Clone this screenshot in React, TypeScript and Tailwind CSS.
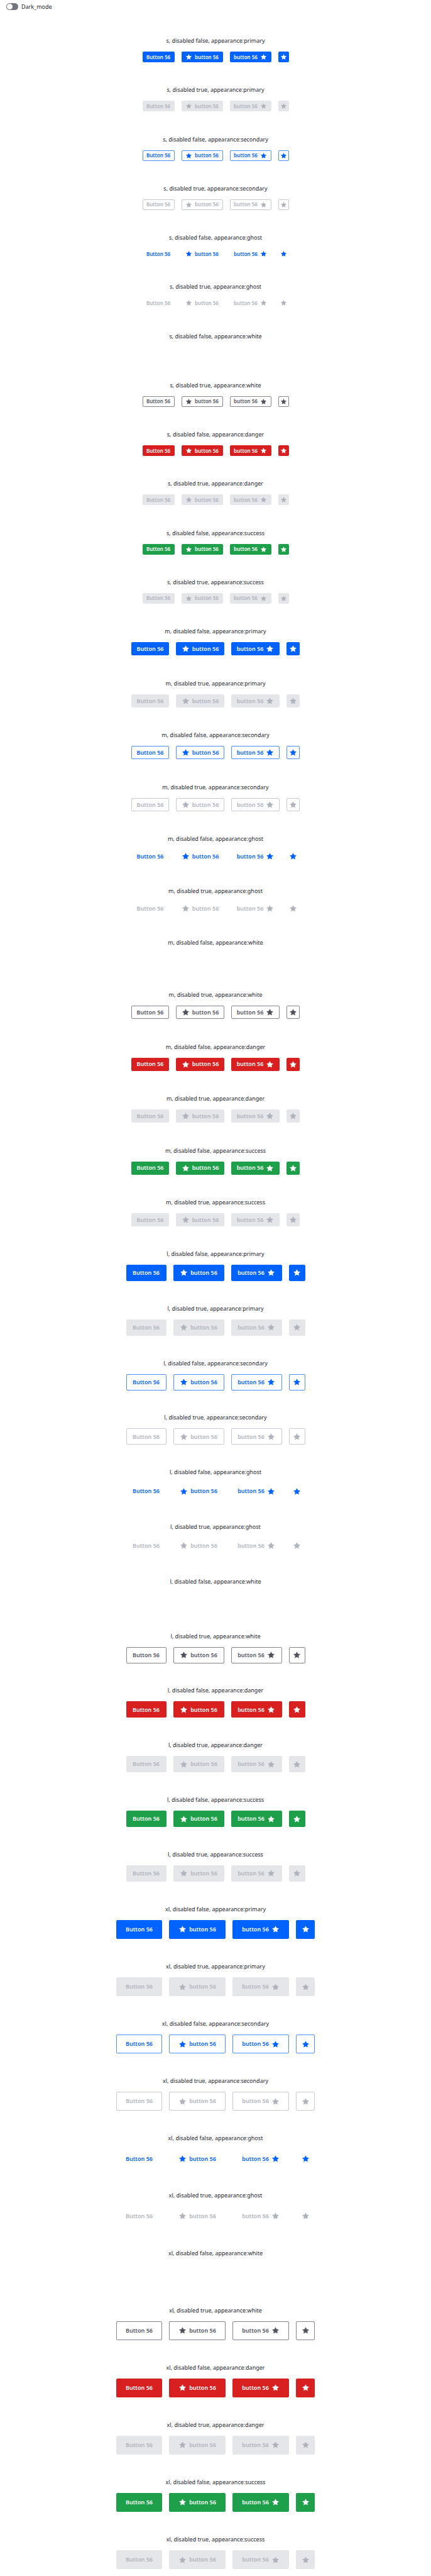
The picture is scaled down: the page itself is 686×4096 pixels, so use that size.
import { useState } from "react";

type Size = "s" | "m" | "l" | "xl";
type Appearance = "primary" | "secondary" | "ghost" | "white" | "danger" | "success";

const sizes: Size[] = ["s", "m", "l", "xl"];
const appearances: Appearance[] = ["primary", "secondary", "ghost", "white", "danger", "success"];

const textSize: Record<Size, string> = {
  s: "h-[17px] text-[8px]",
  m: "h-[21px] text-[9px]",
  l: "h-[26px] text-[9px]",
  xl: "h-[30px] text-[9px]",
};

const plainWidth: Record<Size, string> = {
  s: "min-w-[51px]",
  m: "min-w-[60px]",
  l: "min-w-16",
  xl: "min-w-[73px]",
};

const iconTextWidth: Record<Size, string> = {
  s: "min-w-[66px]",
  m: "min-w-[77px]",
  l: "min-w-[81px]",
  xl: "min-w-[90px]",
};

const squareWidth: Record<Size, string> = {
  s: "w-[17px]",
  m: "w-[21px]",
  l: "w-[26px]",
  xl: "w-[30px]",
};

const iconSize: Record<Size, string> = {
  s: "size-[11px]",
  m: "size-[13px]",
  l: "size-[13px]",
  xl: "size-[13px]",
};

const enabledStyle: Record<Appearance, string> = {
  primary: "border-[#0062ff] bg-[#0062ff] text-white",
  secondary: "border-[#0062ff]/70 text-[#0062ff]",
  ghost: "border-transparent text-[#0062ff]",
  white: "border-white bg-white text-white",
  danger: "border-[#d82020] bg-[#d82020] text-white",
  success: "border-[#1da049] bg-[#1da049] text-white",
};

const disabledStyle: Record<Appearance, string> = {
  primary: "border-[#e5e6ea] bg-[#e5e6ea] text-[#aeb3bd]",
  secondary: "border-[#aeb3bd]/70 text-[#aeb3bd]",
  ghost: "border-transparent text-[#aeb3bd]",
  white: "border-[#50535e]/70 text-[#50535e]",
  danger: "border-[#e5e6ea] bg-[#e5e6ea] text-[#aeb3bd]",
  success: "border-[#e5e6ea] bg-[#e5e6ea] text-[#aeb3bd]",
};

function Star({ size }: { size: Size }) {
  return (
    <svg viewBox="0 0 24 24" fill="currentColor" aria-hidden="true" className={`shrink-0 ${iconSize[size]}`}>
      <path d="M12 2.2l3.1 6.3 7 1-5.1 4.9 1.2 6.9L12 18.1l-6.2 3.2L7 14.4 1.9 9.5l7-1z" />
    </svg>
  );
}

function ButtonRow({ size, appearance, disabled }: { size: Size; appearance: Appearance; disabled: boolean }) {
  const look = disabled ? disabledStyle[appearance] : enabledStyle[appearance];
  const base = `flex items-center justify-center rounded-xs border font-semibold whitespace-nowrap ${textSize[size]} ${look}`;
  return (
    <section className="flex flex-col items-center justify-end gap-[11px] pb-[11px]">
      <p className="text-[9px] leading-3">
        {`${size}, disabled ${disabled}, appearance:${appearance}`}
      </p>
      <div className="flex gap-[11px]">
        <button type="button" disabled={disabled} className={`${base} ${plainWidth[size]}`}>
          Button 56
        </button>
        <button type="button" disabled={disabled} className={`${base} gap-1 ${iconTextWidth[size]}`}>
          <Star size={size} />
          button 56
        </button>
        <button type="button" disabled={disabled} className={`${base} gap-1 ${iconTextWidth[size]}`}>
          button 56
          <Star size={size} />
        </button>
        <button type="button" disabled={disabled} aria-label="Favourite" className={`${base} ${squareWidth[size]}`}>
          <Star size={size} />
        </button>
      </div>
    </section>
  );
}

export default function App() {
  const [dark, setDark] = useState(false);
  return (
    <div
      className={`flex min-h-screen flex-col font-['Noto_Sans',sans-serif] ${
        dark ? "bg-[#1b1d22] text-white" : "bg-white text-[#23262d]"
      }`}
    >
      <header className="flex h-8 items-start px-[10px] pt-[5px]">
        <label className="flex h-[11px] items-center gap-[5px] text-[9px] leading-3">
          <input
            type="checkbox"
            role="switch"
            checked={dark}
            onChange={(event) => setDark(event.target.checked)}
            className="flex h-[11px] w-[19px] appearance-none items-center rounded-full bg-[#717681] px-px before:size-[9px] before:rounded-full before:bg-white checked:justify-end checked:bg-[#0062ff]"
          />
          Dark_mode
        </label>
      </header>
      <main className="grid flex-1 grid-rows-[146fr_154fr_162fr_170fr]">
        {sizes.map((size) => (
          <div key={size} className="grid auto-rows-fr">
            {appearances.flatMap((appearance) =>
              [false, true].map((disabled) => (
                <ButtonRow
                  key={`${appearance}-${disabled}`}
                  size={size}
                  appearance={appearance}
                  disabled={disabled}
                />
              )),
            )}
          </div>
        ))}
      </main>
    </div>
  );
}
